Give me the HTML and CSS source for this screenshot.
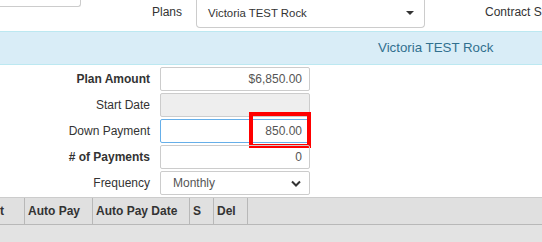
FILE: index.html
```html
<!DOCTYPE html>
<html lang="en">

<head>
	<meta charset="utf-8">
	<title>Payment Plan</title>
	<link rel="stylesheet" href="styles.css">
</head>

<body>
	<div class="topbar">
		<div class="search-box"></div>
		<span class="top-label">Plans</span>
		<div class="plan-select">
			<span>Victoria TEST Rock</span>
			<span class="caret"></span>
		</div>
		<span class="top-label contract">Contract Status</span>
	</div>

	<div class="band">Victoria TEST Rock</div>

	<div class="plan-form">
		<label class="bold">Plan Amount</label>
		<div class="field">$6,850.00</div>

		<label>Start Date</label>
		<div class="field disabled"></div>

		<label>Down Payment</label>
		<div class="field focused">850.00<span class="highlight"></span></div>

		<label class="bold"># of Payments</label>
		<div class="field">0</div>

		<label>Frequency</label>
		<div class="field select">
			<span>Monthly</span>
			<svg width="10" height="7" viewBox="0 0 10 7"><path d="M1 1.5 L5 5.5 L9 1.5" fill="none" stroke="#333" stroke-width="2"/></svg>
		</div>
	</div>

	<div class="grid-head">
		<div class="col c0">t</div>
		<div class="col c1">Auto Pay</div>
		<div class="col c2">Auto Pay Date</div>
		<div class="col c3">S</div>
		<div class="col c4">Del</div>
		<div class="col rest"></div>
	</div>
	<div class="grid-body"></div>
</body>

</html>
```

FILE: styles.css
```css
body {
	margin: 0;
	width: 542px;
	height: 242px;
	overflow: hidden;
	background-color: white;
	color: #333;
	font-family: "Liberation Sans", Arial, sans-serif;
	font-size: 12px;
}
.topbar {
	display: flex;
	align-items: flex-start;
	height: 31px;
	white-space: nowrap;
	overflow: hidden;
}
.topbar > * {
	flex-shrink: 0;
}
.search-box {
	width: 81px;
	height: 7px;
	border: 1px solid #ccc;
	border-top: none;
	border-left: none;
	border-bottom-right-radius: 3px;
	box-sizing: border-box;
}
.top-label {
	margin-left: 71px;
	line-height: 25px;
	color: #333;
}
.plan-select {
	display: flex;
	align-items: center;
	justify-content: space-between;
	margin-left: 14px;
	width: 229px;
	height: 28px;
	padding: 0 10px 2px 11px;
	border: 1px solid #ccc;
	border-top: none;
	border-radius: 0 0 4px 4px;
	box-sizing: border-box;
	font-size: 11.4px;
	color: #333;
}
.caret {
	width: 0;
	height: 0;
	border-left: 4px solid transparent;
	border-right: 4px solid transparent;
	border-top: 4px solid #333;
	margin-top: 1px;
}
.contract {
	margin-left: 60px;
}
.band {
	height: 34px;
	box-sizing: border-box;
	border-top: 1px solid #bce8f1;
	border-bottom: 1px solid #bce8f1;
	background-color: #d9edf7;
	color: #31708f;
	font-size: 13.3px;
	line-height: 31px;
	padding-left: 378px;
	white-space: nowrap;
}
.plan-form {
	display: grid;
	grid-template-columns: 150px 150px;
	column-gap: 10px;
	row-gap: 2px;
	margin-top: 2px;
	align-items: center;
}
.plan-form label {
	text-align: right;
	color: #333;
}
.plan-form label.bold {
	font-weight: bold;
}
.field {
	position: relative;
	height: 24px;
	box-sizing: border-box;
	border: 1px solid #ccc;
	border-radius: 2px;
	padding: 0 7px;
	line-height: 22px;
	text-align: right;
	color: #555;
}
.field.disabled {
	background-color: #eee;
}
.field.focused {
	border-color: #66afe9;
}
.field.select {
	display: flex;
	justify-content: space-between;
	align-items: center;
	text-align: left;
	padding: 0 8px 0 12px;
}
.highlight {
	position: absolute;
	left: 88px;
	top: -8px;
	width: 62px;
	height: 36px;
	border: 4px solid #f00;
	box-sizing: border-box;
}
.grid-head {
	display: flex;
	margin-top: 2px;
	height: 28px;
	box-sizing: border-box;
	background-color: #e0e0e0;
	border-top: 1px solid #ccc;
	border-bottom: 1px solid #b8b8b8;
}
.col {
	box-sizing: border-box;
	border-right: 1px solid #b8b8b8;
	padding-left: 3px;
	font-weight: bold;
	color: #333;
	line-height: 26px;
	white-space: nowrap;
}
.c0 {
	width: 25px;
	padding-left: 0;
}
.c1 {
	width: 68px;
}
.c2 {
	width: 97px;
}
.c3 {
	width: 24px;
}
.c4 {
	width: 34px;
}
.rest {
	flex: 1;
	border-right: none;
}
.grid-body {
	height: 17px;
	background-color: #e3e3e3;
}
```
